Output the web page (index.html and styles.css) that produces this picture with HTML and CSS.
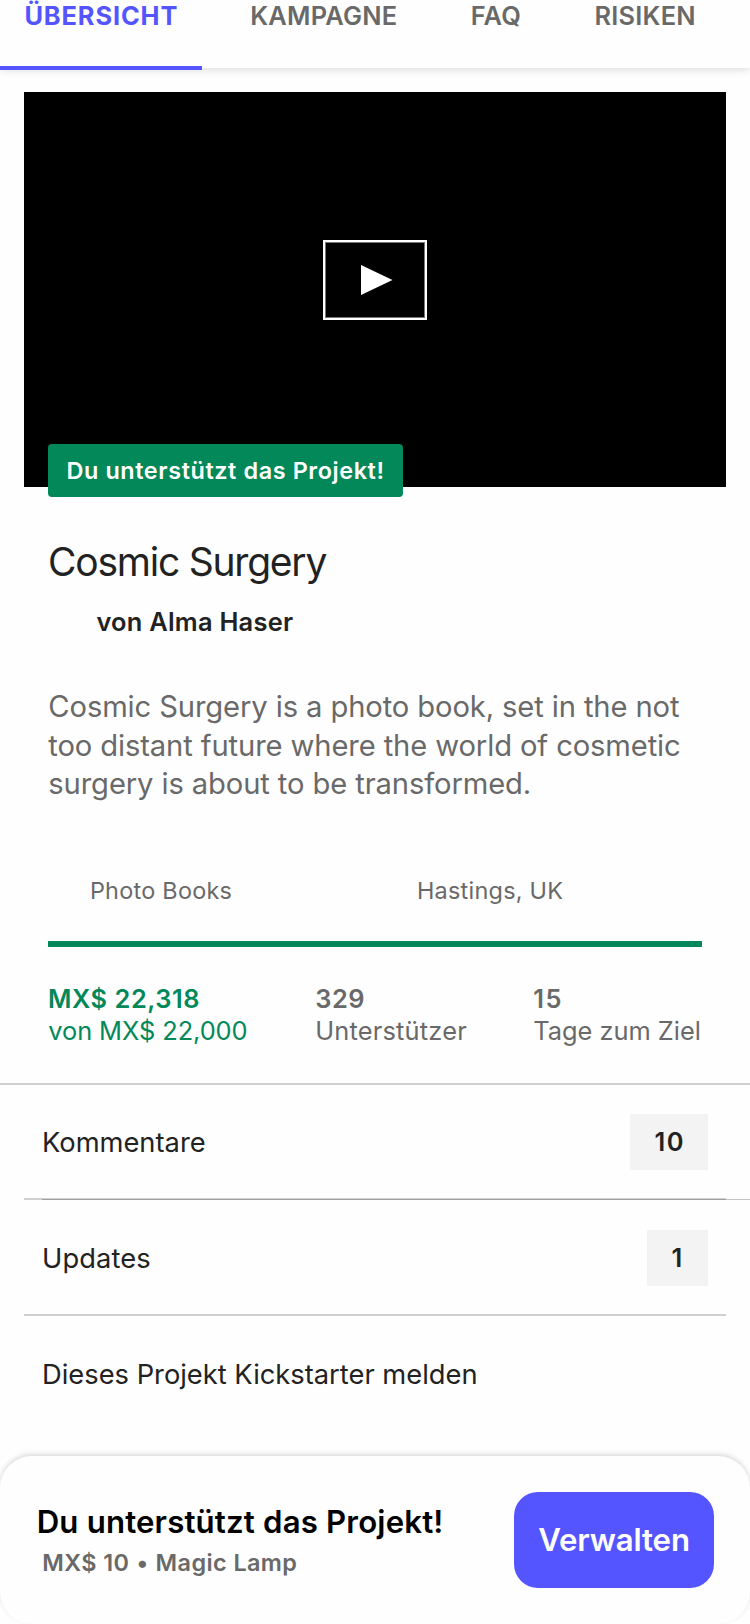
FILE: index.html
```html
<!DOCTYPE html>
<html lang="de">
<head>
<meta charset="utf-8">
<title>Cosmic Surgery</title>
<link rel="stylesheet" href="styles.css">
</head>
<body>
<div class="page">
  <nav class="tabs">
    <a class="tab tab-active">ÜBERSICHT</a>
    <a class="tab">KAMPAGNE</a>
    <a class="tab">FAQ</a>
    <a class="tab">RISIKEN</a>
  </nav>
  <section class="video">
    <div class="play">
      <svg class="play-icon" width="32" height="30" viewBox="0 0 32 30"><path d="M0 0L31.5 15L0 30Z" fill="#fff"/></svg>
    </div>
    <span class="backed">Du unterstützt das Projekt!</span>
  </section>
  <main class="project">
    <h1 class="title">Cosmic Surgery</h1>
    <p class="creator">von Alma Haser</p>
    <p class="blurb"><span>Cosmic Surgery is a photo book, set in the not</span><span>too distant future where the world of cosmetic</span><span>surgery is about to be transformed.</span></p>
    <div class="meta"><span class="category">Photo Books</span><span>Hastings, UK</span></div>
    <div class="progress"></div>
    <div class="stats">
      <div class="stat pledged"><b class="amount">MX$ 22,318</b><span class="goal">von MX$ 22,000</span></div>
      <div class="stat backers"><b class="amount">329</b><span>Unterstützer</span></div>
      <div class="stat days"><b class="short">15</b><span class="remaining">Tage zum Ziel</span></div>
    </div>
  </main>
  <section class="rows">
    <div class="row comments"><span class="label">Kommentare</span><b class="count">10</b></div>
    <div class="row updates"><span class="label">Updates</span><b class="count">1</b></div>
    <div class="row report"><span class="label">Dieses Projekt Kickstarter melden</span></div>
  </section>
  <footer class="panel">
    <div class="pledge">
      <div class="pledge-title">Du unterstützt das Projekt!</div>
      <div class="pledge-reward">MX$ 10 <span class="dot">•</span> Magic Lamp</div>
    </div>
    <button class="manage">Verwalten</button>
  </footer>
</div>
</body>
</html>
```
FILE: styles.css
```css
* { box-sizing: border-box; }
body { margin: 0; background: #fefefe; }
h1, p { margin: 0; }
b { font-weight: 600; }
.page {
  width: 750px; height: 1624px; overflow: hidden;
  display: flex; flex-direction: column;
  font-family: Inter, "Liberation Sans", sans-serif;
  color: #222; white-space: nowrap;
}
.tabs {
  flex: none; height: 68px; display: flex; background: #fefefe;
  box-shadow: 0 2px 8px rgba(0, 0, 0, .13);
  font-size: 25.4px; font-weight: 600; line-height: 32px;
  letter-spacing: .25px; color: #696969;
}
.tab { flex: none; margin-right: 73.3px; }
.tab-active {
  width: 202px; height: 70px; padding-left: 24.4px; margin-right: 48.2px;
  border-bottom: 4px solid #5555ff; color: #5555ff; font-weight: 700; letter-spacing: .88px;
}
.video {
  flex: none; position: relative; height: 395px; margin: 24px 24px 0;
  background: #000; display: flex; justify-content: center;
}
.play {
  width: 104px; height: 80px; margin-top: 148px;
  border: 2px solid #fff; box-shadow: inset 0 0 0 1px #777;
  display: flex; align-items: center; justify-content: center;
}
.play-icon { margin-left: 4px; }
.backed {
  position: absolute; left: 24px; bottom: -10px; width: 355px; height: 53px;
  padding-left: 18.5px; border-radius: 4px; background: #038859; color: #fff;
  font-size: 23.4px; font-weight: 600; line-height: 53px; letter-spacing: .6px;
}
.project { flex: none; height: 598px; border-bottom: 2px solid #d0d0d0; padding: 51px 48px 0; }
.title { font-size: 39px; font-weight: 400; line-height: 48px; letter-spacing: -1.23px; }
.creator {
  margin-top: 19.5px; padding-left: 48.4px;
  font-size: 25.4px; font-weight: 600; line-height: 32px; letter-spacing: .25px;
}
.blurb {
  display: flex; flex-direction: column; margin-top: 50.5px; padding-left: .3px;
  font-size: 29.2px; line-height: 38.7px; letter-spacing: -.12px; color: #696969;
}
.meta {
  display: grid; grid-template-columns: 327px 1fr; margin-top: 72px; padding-left: 41.9px;
  font-size: 23.4px; line-height: 30px; letter-spacing: .27px; color: #696969;
}
.progress { height: 6px; margin-top: 35px; background: #038859; }
.stats {
  display: grid; grid-template-columns: 267.2px 218px 1fr; margin-top: 36px;
  font-size: 25.4px; line-height: 32px; letter-spacing: .2px; color: #696969;
}
.stat { display: flex; flex-direction: column; }
.pledged { color: #038859; }
.amount { letter-spacing: .55px; }
.goal { padding-left: .3px; letter-spacing: -.08px; }
.remaining { letter-spacing: -.01px; }
.short { letter-spacing: 1.5px; }
.rows { flex: 1; font-size: 27.3px; line-height: 36px; }
.row { display: flex; align-items: center; justify-content: space-between; margin: 0 24px; padding: 0 18px; }
.label { padding-top: 2px; }
.comments {
  position: relative; height: 115px; border-bottom: 2px solid #d0d0d0;
}
/* Hairline that runs from the row's text edge to the screen edge */
.comments::after {
  content: ""; position: absolute; left: 18px; right: -24px; bottom: -2px;
  height: 1px; background: rgba(0, 0, 0, .23);
}
.updates { height: 116px; border-bottom: 2px solid #d0d0d0; padding-top: 2px; }
.updates .label { letter-spacing: .1px; }
.report { height: 116px; }
.count {
  width: 78px; height: 56px; padding-left: 24.6px; background: #f3f3f3;
  font-size: 25.4px; line-height: 56px; letter-spacing: 1.3px;
}
.updates .count { width: 61px; }
.panel {
  flex: none; height: 168px; display: flex; justify-content: space-between; align-items: flex-start;
  padding: 36px 36px 0 36.7px; border-radius: 32px; background: #fefefe;
  box-shadow: 0 -2px 5px rgba(0, 0, 0, .14);
}
.pledge { padding-top: 11.3px; }
.pledge-title { font-size: 31.2px; font-weight: 600; line-height: 38px; letter-spacing: .16px; color: #000; }
.pledge-reward {
  margin-top: 6.5px; padding-left: 5.6px;
  font-size: 23.4px; font-weight: 600; line-height: 30px; letter-spacing: .42px; color: #696969;
}
.dot { font-weight: 400; }
.manage {
  width: 200px; height: 96px; padding: 0; border: 0; border-radius: 24px;
  background: #5555ff; color: #fff;
  font: 600 31.2px/38px Inter, "Liberation Sans", sans-serif; letter-spacing: -.13px;
}
```
